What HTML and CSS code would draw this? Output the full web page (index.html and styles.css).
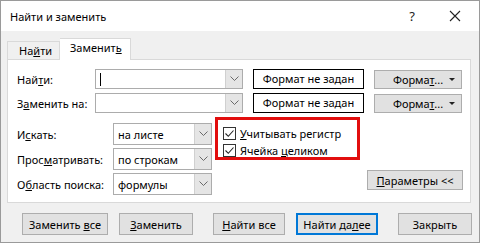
FILE: index.html
```html
<!DOCTYPE html>
<html lang="ru">
<head>
    <meta charset="UTF-8">
    <title>Найти и заменить</title>
    <link rel="stylesheet" href="styles.css">
</head>
<body>
    <div class="window">
        <div class="titlebar">
            <span class="title">Найти и заменить</span>
            <span class="help">?</span>
            <svg class="close" width="12" height="12" viewBox="0 0 12 12">
                <path d="M1 1 L11 11 M11 1 L1 11" stroke="#222" stroke-width="1.1" fill="none"/>
            </svg>
        </div>

        <div class="client">
            <div class="tabs">
                <div class="tab">На<u>й</u>ти</div>
                <div class="tab tab-active">Заменит<u>ь</u></div>
            </div>

            <div class="panel">
                <div class="row">
                    <label class="label">Най<u>т</u>и:</label>
                    <div class="combo combo-wide">
                        <span class="value"><span class="caret"></span></span>
                        <span class="combo-btn"><svg width="9" height="6" viewBox="0 0 9 6"><path d="M0.5 0.5 L4.5 4.5 L8.5 0.5" stroke="#6a6a6a" fill="none"/></svg></span>
                    </div>
                    <div class="format-box">Формат не задан</div>
                    <button class="btn btn-format">Форма<u>т</u>...<span class="arrow"></span></button>
                </div>
                <div class="row">
                    <label class="label">З<u>а</u>менить на:</label>
                    <div class="combo combo-wide">
                        <span class="value"></span>
                        <span class="combo-btn"><svg width="9" height="6" viewBox="0 0 9 6"><path d="M0.5 0.5 L4.5 4.5 L8.5 0.5" stroke="#6a6a6a" fill="none"/></svg></span>
                    </div>
                    <div class="format-box">Формат не задан</div>
                    <button class="btn btn-format">Форма<u>т</u>...<span class="arrow"></span></button>
                </div>

                <div class="options">
                    <div class="selects">
                        <div class="row-s">
                            <label class="label label-s">И<u>с</u>кать:</label>
                            <div class="combo combo-small">
                                <span class="value">на листе</span>
                                <span class="combo-btn"><svg width="9" height="6" viewBox="0 0 9 6"><path d="M0.5 0.5 L4.5 4.5 L8.5 0.5" stroke="#6a6a6a" fill="none"/></svg></span>
                            </div>
                        </div>
                        <div class="row-s">
                            <label class="label label-s">Прос<u>м</u>атривать:</label>
                            <div class="combo combo-small">
                                <span class="value">по строкам</span>
                                <span class="combo-btn"><svg width="9" height="6" viewBox="0 0 9 6"><path d="M0.5 0.5 L4.5 4.5 L8.5 0.5" stroke="#6a6a6a" fill="none"/></svg></span>
                            </div>
                        </div>
                        <div class="row-s">
                            <label class="label label-s">О<u>б</u>ласть поиска:</label>
                            <div class="combo combo-small">
                                <span class="value">формулы</span>
                                <span class="combo-btn"><svg width="9" height="6" viewBox="0 0 9 6"><path d="M0.5 0.5 L4.5 4.5 L8.5 0.5" stroke="#6a6a6a" fill="none"/></svg></span>
                            </div>
                        </div>
                    </div>

                    <div class="checks">
                        <div class="check">
                            <span class="box"><svg width="11" height="11" viewBox="0 0 11 11"><path d="M1.5 5.5 L4.3 8.3 L9.5 2.5" stroke="#222" stroke-width="1.1" fill="none"/></svg></span>
                            <span><u>У</u>читывать регистр</span>
                        </div>
                        <div class="check">
                            <span class="box"><svg width="11" height="11" viewBox="0 0 11 11"><path d="M1.5 5.5 L4.3 8.3 L9.5 2.5" stroke="#222" stroke-width="1.1" fill="none"/></svg></span>
                            <span>Ячейка <u>ц</u>еликом</span>
                        </div>
                    </div>

                    <button class="btn btn-params"><u>П</u>араметры &lt;&lt;</button>
                </div>
            </div>

            <div class="actions">
                <button class="btn btn-replace-all">Заменить <u>в</u>се</button>
                <button class="btn btn-replace"><u>З</u>аменить</button>
                <button class="btn btn-find-all"><u>Н</u>айти все</button>
                <button class="btn btn-find-next">Найти да<u>л</u>ее</button>
                <button class="btn btn-close">Закрыть</button>
            </div>
        </div>
    </div>
</body>
</html>
```

FILE: styles.css
```css
* {
    box-sizing: border-box;
}

body {
    margin: 0;
    font-family: "Noto Sans", "Open Sans", sans-serif;
    font-size: 11px;
    color: #000;
}

u {
    text-underline-offset: 1px;
}

.window {
    width: 480px;
    height: 243px;
    border: 1px solid #9a9a9a;
    background-color: #f0f0f0;
    display: flex;
    flex-direction: column;
}

/* заголовок окна */
.titlebar {
    height: 30px;
    background-color: #fff;
    display: flex;
    align-items: center;
    padding-left: 9px;
}

.title {
    flex: 1;
    font-size: 11px;
}

.help {
    font-size: 13px;
    color: #222;
    margin-right: 34px;
}

.close {
    margin-right: 18px;
}

.client {
    flex: 1;
    padding: 7px 0 0 6px;
}

/* вкладки */
.tabs {
    display: flex;
    align-items: flex-end;
    height: 21px;
}

.tab {
    height: 18px;
    width: 53px;
    border: 1px solid #d9d9d9;
    border-bottom: none;
    padding-left: 11px;
    line-height: 18px;
    background-color: #f0f0f0;
}

.tab-active {
    height: 22px;
    width: 71px;
    margin-bottom: -1px;
    border-left: none;
    background-color: #fff;
    padding-left: 10px;
    line-height: 18px;
}

.panel {
    width: 464px;
    height: 144px;
    background-color: #fff;
    border: 1px solid #d9d9d9;
    padding: 9px 7px 0 9px;
}

.row {
    display: flex;
    align-items: center;
    height: 20px;
    margin-bottom: 4px;
}

.label {
    width: 78px;
    white-space: nowrap;
}

.label-s {
    width: 96px;
}

/* выпадающие списки */
.combo {
    height: 20px;
    border: 1px solid #acacac;
    display: flex;
    background-color: #fff;
}

.combo-wide {
    width: 148px;
}

.combo-small {
    width: 99px;
    height: 22px;
}

.combo .value {
    flex: 1;
    padding-left: 4px;
    display: flex;
    align-items: center;
}

.caret {
    width: 1px;
    height: 13px;
    background-color: #000;
}

.combo-btn {
    width: 17px;
    background-color: #e5e5e5;
    border-left: 1px solid #d0d0d0;
    display: flex;
    align-items: center;
    justify-content: center;
}

.format-box {
    width: 111px;
    height: 20px;
    margin-left: 10px;
    border: 1px solid #000;
    text-align: center;
    line-height: 18px;
}

/* кнопки */
.btn {
    font-family: inherit;
    font-size: 11px;
    color: #000;
    background-color: #e1e1e1;
    border: 1px solid #adadad;
    padding: 0;
    height: 22px;
}

.btn-format {
    width: 88px;
    height: 19px;
    margin-left: 10px;
    position: relative;
}

.arrow {
    position: absolute;
    right: 6px;
    top: 7px;
    border-left: 3px solid transparent;
    border-right: 3px solid transparent;
    border-top: 3px solid #222;
}

.options {
    display: flex;
    margin-top: 4px;
}

.selects {
    padding-top: 6px;
}

.row-s {
    display: flex;
    align-items: center;
    height: 22px;
    margin-bottom: 3px;
}

.checks {
    width: 145px;
    height: 43px;
    margin-left: 3px;
    border: 3px solid #e20e0e;
    padding: 5px 0 0 5px;
}

.check {
    display: flex;
    align-items: center;
    height: 17px;
    white-space: nowrap;
}

.box {
    width: 13px;
    height: 13px;
    border: 1px solid #333;
    margin-right: 4px;
    display: flex;
    align-items: center;
    justify-content: center;
    background-color: #fff;
}

.btn-params {
    width: 96px;
    height: 20px;
    margin-left: auto;
    align-self: flex-end;
    margin-bottom: 8px;
}

/* нижний ряд кнопок */
.actions {
    display: flex;
    margin-top: 10px;
    padding-left: 15px;
}

.btn-replace-all {
    width: 86px;
}

.btn-replace {
    width: 74px;
    margin-left: 11px;
}

.btn-find-all {
    width: 72px;
    margin-left: 20px;
}

.btn-find-next {
    width: 82px;
    margin-left: 11px;
    border: 2px solid #0078d7;
}

.btn-close {
    width: 74px;
    margin-left: 20px;
}
```
